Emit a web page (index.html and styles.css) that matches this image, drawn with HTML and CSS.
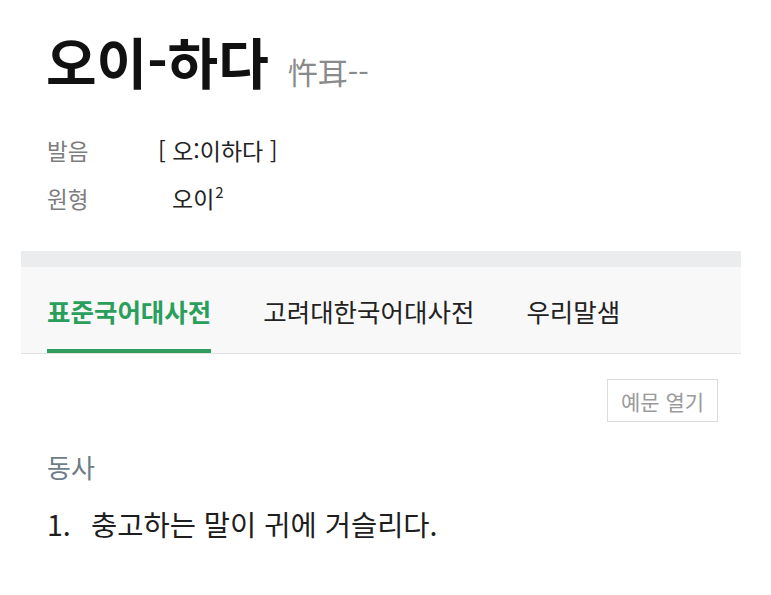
FILE: index.html
```html
<!DOCTYPE html>
<html lang="ko">
<head>
<meta charset="utf-8">
<link rel="stylesheet" href="styles.css">
</head>
<body>
<div class="page">
  <header class="head">
    <h1 class="word">오이-하다</h1>
    <span class="hanja">忤耳--</span>
  </header>
  <dl class="info">
    <div class="row"><dt>발음</dt><dd class="pron">[ 오:이하다 ]</dd></div>
    <div class="row"><dt>원형</dt><dd class="orig">오이<sup>2</sup></dd></div>
  </dl>
  <section class="dict">
    <div class="band"></div>
    <nav class="tabs">
      <span class="tab active">표준국어대사전</span>
      <span class="tab">고려대한국어대사전</span>
      <span class="tab">우리말샘</span>
    </nav>
  </section>
  <div class="tools"><button class="btn">예문 열기</button></div>
  <div class="pos">동사</div>
  <ol class="defs"><li><span class="num">1.</span>충고하는 말이 귀에 거슬리다.</li></ol>
</div>
</body>
</html>
```

FILE: styles.css
```css
html, body { margin: 0; background: #fff; }
body { font-family: "Noto Sans CJK KR", "Noto Sans", sans-serif; color: #1a1a1a; }
.page { width: 771px; height: 595px; overflow: hidden; }
.head { display: flex; align-items: baseline; gap: 19px; padding: 22px 0 0 46px; }
.word { margin: 0; font-size: 55px; font-weight: 700; line-height: 76px; color: #111; }
.hanja { font-size: 30px; color: #8a8a8a; }
.info { margin: 28px 0 0 47px; }
.row { display: flex; align-items: center; height: 48px; }
.row dt { width: 111px; font-size: 22.5px; color: #7d7d7d; }
.row dd { margin: 0; font-size: 23px; color: #222; }
.orig { padding-left: 14px; }
.orig sup { font-size: 15px; vertical-align: 10px; line-height: 0; margin-left: 1px; }
.dict { margin: 29px 30px 0 21px; }
.band { height: 16px; background: #ebeced; }
.tabs { display: flex; gap: 52px; height: 87px; padding-left: 26px; background: #f8f8f8; border-bottom: 1px solid #e2e2e2; box-sizing: border-box; }
.tab { display: flex; align-items: center; font-size: 25.5px; color: #222; border-bottom: 4px solid transparent; padding-top: 4px; }
.tab.active { color: #2a9f5b; font-weight: 700; border-bottom-color: #2e9d5d; }
.tools { display: flex; justify-content: flex-end; padding: 25px 53px 0 0; }
.btn { width: 111px; height: 43px; border: 1px solid #dcdcdc; background: #fff; font-family: inherit; font-size: 21px; color: #9a9a9a; padding: 0; }
.pos { margin: 21px 0 0 47px; font-size: 26px; color: #6e7c89; line-height: 48px; }
.defs { list-style: none; margin: 12px 0 0 47px; padding: 0; font-size: 28.5px; color: #1e1e1e; }
.defs .num { display: inline-block; width: 44px; }
```
